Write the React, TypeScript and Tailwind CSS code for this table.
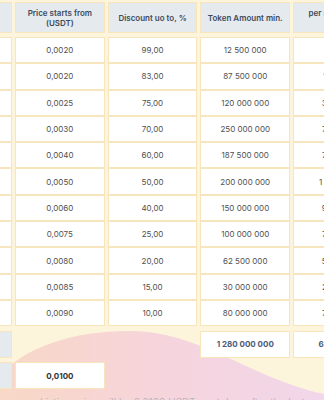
import React from "react"

const rows = [
  ["Round 1", "0,0020", "99,00", "12 500 000", "25 000"],
  ["Round 2", "0,0020", "83,00", "87 500 000", "175 000"],
  ["Round 3", "0,0025", "75,00", "120 000 000", "300 000"],
  ["Round 4", "0,0030", "70,00", "250 000 000", "750 000"],
  ["Round 5", "0,0040", "60,00", "187 500 000", "750 000"],
  ["Round 6", "0,0050", "50,00", "200 000 000", "1 000 000"],
  ["Round 7", "0,0060", "40,00", "150 000 000", "900 000"],
  ["Round 8", "0,0075", "25,00", "100 000 000", "750 000"],
  ["Round 9", "0,0080", "20,00", "62 500 000", "500 000"],
  ["Round 10", "0,0085", "15,00", "30 000 000", "255 000"],
  ["Round 11", "0,0090", "10,00", "80 000 000", "720 000"],
]

const headers = [
  ["Round"],
  ["Price starts from", "(USDT)"],
  ["Discount uo to, %"],
  ["Token Amount min."],
  ["per round, USD", "sum"],
]

const Cell = ({ children, className = "" }: { children?: React.ReactNode; className?: string }) => (
  <div className={`flex w-[89.7px] items-center justify-center border border-[#f7e5bd] text-center ${className}`}>
    {children}
  </div>
)

export default function App() {
  return (
    <div className="relative h-[400px] w-[324px] overflow-hidden bg-[#fdf4dc] font-['Inter',sans-serif]">
      <svg className="absolute inset-0" width="324" height="400" viewBox="0 0 324 400">
        <defs>
          <linearGradient id="blob" x1="0" y1="0" x2="1" y2="0">
            <stop offset="0" stopColor="#f8d8c6" />
            <stop offset="0.5" stopColor="#f6d4dc" />
            <stop offset="1" stopColor="#f1d7ea" />
          </linearGradient>
        </defs>
        <path d="M0,375 C25,348 70,331 130,331 C200,331 250,378 324,394 L324,400 L0,400 Z" fill="url(#blob)" />
      </svg>

      <div className="relative ml-[-77.7px] flex w-max flex-col pt-[2px]">
        <div className="flex gap-[3px]">
          {headers.map((h, i) => (
            <Cell key={i} className="h-[31px] flex-col bg-[#e5eaef] text-[8px] font-semibold leading-[10px] text-[#3e4a5b]">
              {h.map((l) => (
                <span key={l} className="whitespace-nowrap">{l}</span>
              ))}
            </Cell>
          ))}
        </div>

        <div className="mt-[4px] flex flex-col">
          {rows.map((r) => (
            <div key={r[0]} className="flex gap-[3px]">
              {r.map((v, i) => (
                <Cell key={i} className="h-[26.3px] bg-white text-[8px] text-[#505050]">
                  {v}
                </Cell>
              ))}
            </div>
          ))}
        </div>

        <div className="mt-[4.7px] flex gap-[3px]">
          <Cell className="h-[27px] bg-[#e5eaef] text-[8px] font-semibold text-[#3e4a5b]">Total</Cell>
          <div className="w-[89.7px]" />
          <div className="w-[89.7px]" />
          <Cell className="h-[27px] bg-white text-[8px] font-bold text-[#4b5b7a]">1 280 000 000</Cell>
          <Cell className="h-[27px] bg-white text-[8px] font-bold text-[#4b5b7a]">6 125 000</Cell>
        </div>

        <div className="mt-[4.5px] flex gap-[3px]">
          <Cell className="h-[27px] bg-[#e5eaef] text-[8px] font-semibold text-[#3e4a5b]">Listing</Cell>
          <Cell className="h-[27px] bg-white text-[8px] font-bold text-[#333]">0,0100</Cell>
        </div>
      </div>

      <p className="relative mt-[7px] pl-[40px] text-[10px] leading-[12px] text-[#bdb5bb]">
        Listing price will be 0,0100 USDT per token after the last round
      </p>
    </div>
  )
}
